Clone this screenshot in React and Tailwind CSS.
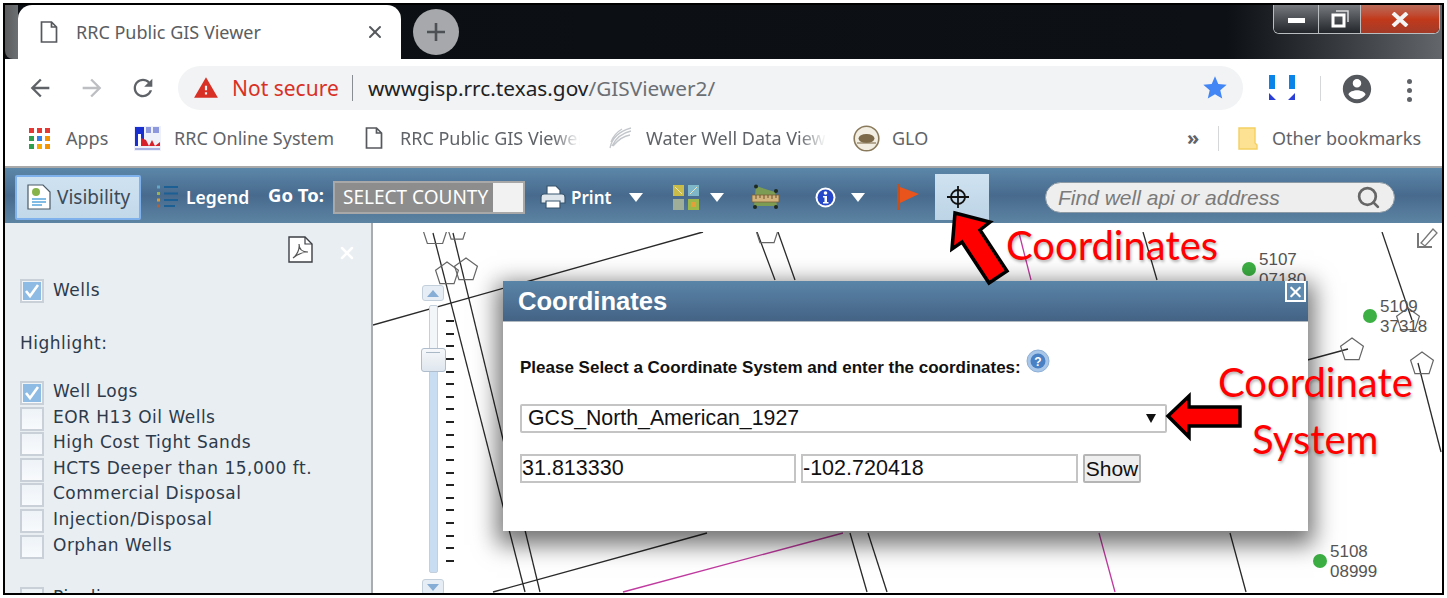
import React from "react";
import { Search, X } from "lucide-react";

const CHROME_FONT = "font-['Noto_Sans',sans-serif]";
const PANEL_FONT = "font-['DejaVu_Sans',sans-serif]";
const ARIAL = "font-['Liberation_Sans',Arial,sans-serif]";

const HIGHLIGHTS = [
  { label: "Well Logs", checked: true },
  { label: "EOR H13 Oil Wells" },
  { label: "High Cost Tight Sands" },
  { label: "HCTS Deeper than 15,000 ft." },
  { label: "Commercial Disposal" },
  { label: "Injection/Disposal" },
  { label: "Orphan Wells" },
];

const TICKS = Array.from({ length: 20 }, (_, i) => i);

const BLACK_LINES = [
  [373, 325, 703, 232],
  [433, 233, 525, 592],
  [453, 233, 540, 592],
  [493, 592, 707, 533],
  [757, 232, 775, 280],
  [778, 232, 795, 280],
  [850, 533, 867, 592],
  [868, 533, 887, 592],
  [1143, 232, 1157, 280],
  [1230, 533, 1246, 592],
  [1382, 232, 1412, 320],
  [1418, 363, 1441, 452],
  [1300, 362, 1348, 349],
];

const MAGENTA_LINES = [
  [623, 592, 843, 533],
  [1019, 233, 1031, 280],
  [1099, 533, 1115, 592],
];

const pentagon = (cx, cy, r) =>
  [0, 1, 2, 3, 4]
    .map((i) => {
      const a = -Math.PI / 2 + (i * 2 * Math.PI) / 5;
      return `${cx + r * Math.cos(a)},${cy + r * Math.sin(a)}`;
    })
    .join(" ");

const PENTAGONS = [
  [447, 274, 12],
  [466, 270, 12],
  [1352, 350, 12],
  [1422, 364, 12],
  [1408, 320, 12],
  [435, 233, 13],
  [457, 231, 10],
  [767, 233, 12],
];

const Caret = ({ className = "" }) => (
  <svg width="14" height="9" viewBox="0 0 14 9" className={`shrink-0 ${className}`}>
    <path d="M0 0h14L7 9z" fill="#fff" />
  </svg>
);

const Material = ({ d, size = 24, fill = "#5f6368", className = "" }) => (
  <svg width={size} height={size} viewBox="0 0 24 24" className={`shrink-0 ${className}`}>
    <path d={d} fill={fill} />
  </svg>
);

const DocIcon = ({ className = "" }) => (
  <svg width="18" height="22" viewBox="0 0 18 22" className={`shrink-0 ${className}`}>
    <path d="M1.5 1h10l5 5v15h-15zM11.5 1v5h5" fill="#fff" stroke="#55585c" strokeWidth="1.7" />
  </svg>
);

const Checkbox = ({ checked }) => (
  <span className="flex h-[24px] w-[24px] shrink-0 items-center justify-center border-2 border-[#c9d0d8] bg-gradient-to-b from-[#eef3f8] to-[#f8fafc]">
    {checked && (
      <svg width="18" height="18" viewBox="0 0 18 18">
        <rect width="18" height="18" fill="#8dbbe3" />
        <path d="M3 9l4 5 8-11" fill="none" stroke="#fff" strokeWidth="2.6" />
      </svg>
    )}
  </span>
);

const TabStrip = () => (
  <div className="relative flex h-[54px] shrink-0 bg-gradient-to-r from-[#0b0e12] via-[#0d1116] via-[85%] to-[#63666a]">
    <div className="h-[54px] w-[13px] rounded-bl-[8px] bg-gradient-to-r from-[#5a5c5e] to-[#6d7072]" />
    <div className="flex h-[54px] w-[383px] items-center rounded-t-[14px] bg-white pl-[22px]">
      <DocIcon />
      <span className={`ml-[18px] w-[289px] text-[18px] text-[#5a5d61] ${CHROME_FONT}`}>RRC Public GIS Viewer</span>
      <X size={20} strokeWidth={2.4} className="text-[#55585c]" />
    </div>
    <div className="ml-[12px] mt-[4px] flex h-[46px] w-[46px] items-center justify-center rounded-full bg-[#a6a8ab]">
      <svg width="20" height="20" viewBox="0 0 20 20">
        <path d="M10 1v18M1 10h18" stroke="#4d5054" strokeWidth="2.6" />
      </svg>
    </div>
    <div className="ml-auto mr-[2px] flex h-[29px] w-[167px] overflow-hidden rounded-b-[6px] border border-t-0 border-[#b9bdc0] bg-black">
      <div className="flex w-[45px] items-center justify-center border-r border-[#b9bdc0] bg-gradient-to-b from-[#777b7f] to-[#23272b]">
        <div className="mt-[2px] h-[5px] w-[17px] bg-white" />
      </div>
      <div className="flex w-[42px] items-center justify-center border-r border-[#b9bdc0] bg-gradient-to-b from-[#777b7f] to-[#23272b]">
        <svg width="18" height="18" viewBox="0 0 18 18">
          <path d="M5 1h12v11" fill="none" stroke="#ddd" strokeWidth="1.5" />
          <rect x="2" y="5" width="11" height="11" fill="none" stroke="#fff" strokeWidth="3" />
        </svg>
      </div>
      <div className="flex flex-1 items-center justify-center bg-gradient-to-b from-[#b86a58] via-[#c2391a] to-[#a23b28]">
        <svg width="18" height="15" viewBox="0 0 18 15">
          <path d="M2 1l14 13M16 1L2 14" stroke="#f4f4f4" strokeWidth="4" />
        </svg>
      </div>
    </div>
  </div>
);

const AddressBar = () => (
  <div className="flex h-[51px] shrink-0 items-start bg-white">
    <Material className="ml-[21px] mt-[15px]" size={28} d="M20 11H7.83l5.59-5.59L12 4l-8 8 8 8 1.41-1.41L7.83 13H20v-2z" />
    <Material className="ml-[24px] mt-[15px] rotate-180" size={28} fill="#bcbec1" d="M20 11H7.83l5.59-5.59L12 4l-8 8 8 8 1.41-1.41L7.83 13H20v-2z" />
    <Material className="ml-[23px] mt-[15px]" size={28} d="M17.65 6.35C16.2 4.9 14.21 4 12 4c-4.42 0-7.99 3.58-7.99 8s3.57 8 7.99 8c3.73 0 6.84-2.55 7.73-6h-2.08c-.82 2.33-3.04 4-5.65 4-3.31 0-6-2.69-6-6s2.69-6 6-6c1.66 0 3.14.69 4.22 1.78L13 11h7V4l-2.35 2.35z" />
    <div className={`ml-[21px] mt-[7px] flex h-[44px] w-[1065px] shrink-0 items-center rounded-full bg-[#f1f3f4] pl-[15px] ${CHROME_FONT}`}>
      <Material size={26} fill="#d93025" d="M1 21h22L12 2 1 21zm12-3h-2v-2h2v2zm0-4h-2v-4h2v4z" />
      <span className="ml-[13px] mt-[2px] w-[107px] whitespace-nowrap text-[21px] text-[#d93025]">Not secure</span>
      <span className="ml-[13px] h-[26px] w-px bg-[#8a8d91]" />
      <span className="ml-[15px] mt-[2px] w-[750px] whitespace-nowrap text-[20.800px] text-[#202124]">
        wwwgisp.rrc.texas.gov<span className="text-[#6b6f74]">/GISViewer2/</span>
      </span>
      <Material className="ml-[83px]" size={28} fill="#4285f4" d="M12 17.27L18.18 21l-1.64-7.03L22 9.24l-7.19-.61L12 2 9.19 8.63 2 9.24l5.46 4.73L5.82 21z" />
    </div>
    <svg width="28" height="28" viewBox="0 0 28 28" className="ml-[25px] mt-[15px] shrink-0">
      <path d="M1 1h6v14H1zM21 1h6v14h-6z" fill="#0a84e8" />
      <path d="M1 19l7 7H1zM27 19l-7 7h7z" fill="#2a3fd8" />
    </svg>
    <span className="ml-[24px] mt-[17px] h-[25px] w-px bg-[#d5d7d9]" />
    <Material className="ml-[19px] mt-[13px]" size={34} fill="#55585c" d="M12 2C6.48 2 2 6.48 2 12s4.48 10 10 10 10-4.48 10-10S17.52 2 12 2zm0 3c1.66 0 3 1.34 3 3s-1.34 3-3 3-3-1.34-3-3 1.34-3 3-3zm0 14.2c-2.5 0-4.71-1.28-6-3.22.03-1.99 4-3.08 6-3.08 1.99 0 5.97 1.09 6 3.08-1.29 1.94-3.5 3.22-6 3.22z" />
    <div className="ml-[33px] mt-[20px] flex flex-col gap-[4px]">
      <span className="h-[5px] w-[5px] rounded-full bg-[#5f6368]" />
      <span className="h-[5px] w-[5px] rounded-full bg-[#5f6368]" />
      <span className="h-[5px] w-[5px] rounded-full bg-[#5f6368]" />
    </div>
  </div>
);

const APPS_COLORS = ["#e53935", "#e53935", "#e53935", "#2e9e4f", "#2f80ed", "#f59300", "#2e9e4f", "#f9ab00", "#f59300"];

const BookmarkText = ({ children, className = "" }) => (
  <span className={`whitespace-nowrap text-[18px] text-[#5f6368] ${className}`}>{children}</span>
);

const Bookmarks = () => (
  <div className={`flex h-[56px] shrink-0 items-center bg-white ${CHROME_FONT}`}>
    <div className="ml-[24px] grid w-[21px] shrink-0 grid-cols-3 gap-[3px]">
      {APPS_COLORS.map((c, i) => (
        <svg key={i} width="5" height="5" viewBox="0 0 5 5">
          <rect width="5" height="5" fill={c} />
        </svg>
      ))}
    </div>
    <BookmarkText className="ml-[16px] w-[42px]">Apps</BookmarkText>
    <svg width="27" height="25" viewBox="0 0 27 25" className="ml-[26px] shrink-0">
      <rect width="27" height="25" fill="#eef0fa" />
      <path d="M1 1h9v19H1z" fill="#1a2fd0" />
      <path d="M12 1h5v6h-5zM19 1h6v6h-6z" fill="#8d99dc" />
      <path d="M4 8h3v12H4z" fill="#fff" />
      <path d="M7 12l5 2 3 6 3-6 3 6 5-4v4H7z" fill="#d8202a" />
      <path d="M1 22h25v2H1z" fill="#aab2e4" />
    </svg>
    <BookmarkText className="ml-[13px] w-[161px]">RRC Online System</BookmarkText>
    <DocIcon className="ml-[30px]" />
    <BookmarkText className="ml-[17px] w-[180px] overflow-hidden [mask-image:linear-gradient(to_right,black_85%,transparent)]">RRC Public GIS Viewer</BookmarkText>
    <svg width="24" height="24" viewBox="0 0 24 24" className="ml-[28px] shrink-0">
      <path d="M2 22C4 12 12 5 23 2M4 20C8 12 14 7 23 5M5 20C10 14 15 10 22 9M3 16C5 10 9 6 14 3" fill="none" stroke="#c3c7cb" strokeWidth="1.3" />
    </svg>
    <BookmarkText className="ml-[14px] w-[180px] overflow-hidden [mask-image:linear-gradient(to_right,black_85%,transparent)]">Water Well Data Viewer</BookmarkText>
    <svg width="27" height="27" viewBox="0 0 27 27" className="ml-[27px] shrink-0">
      <circle cx="13.5" cy="13.5" r="12.3" fill="#f3eee2" stroke="#8a7a5c" strokeWidth="1.6" />
      <ellipse cx="13.5" cy="13.5" rx="8" ry="4.5" fill="#7c6a48" />
      <path d="M4 18h19" stroke="#8a7a5c" strokeWidth="1.2" />
    </svg>
    <BookmarkText className="ml-[12px] w-[38px]">GLO</BookmarkText>
    <span className="ml-[257px] w-[14px] text-[20px] font-bold leading-none text-[#5f6368]">»</span>
    <span className="ml-[17px] h-[25px] w-px bg-[#d5d7d9]" />
    <svg width="20" height="23" viewBox="0 0 20 23" className="ml-[19px] shrink-0">
      <path d="M1 1h16v15l2 2v4H1z" fill="#fde293" stroke="#f4cf63" strokeWidth="1.4" />
    </svg>
    <BookmarkText className="ml-[14px]">Other bookmarks</BookmarkText>
  </div>
);

const Toolbar = () => (
  <div className="flex h-[57px] shrink-0 items-center border-t-2 border-[#a9a9a9] bg-gradient-to-b from-[#5c87a8] via-[#476a8d] to-[#5d84a3] pt-[3px]">
    <div className="ml-[10px] flex h-[45px] w-[126px] shrink-0 items-center rounded-[2px] border-2 border-[#7fb1ec] bg-gradient-to-b from-[#cfe2f1] to-[#c2d9ea] pl-[10px]">
      <svg width="24" height="26" viewBox="0 0 24 26" className="shrink-0">
        <path d="M1 1h15l7 7v17H1z" fill="#fff" stroke="#4a5a66" strokeWidth="1.2" />
        <circle cx="9" cy="8" r="4" fill="#86b44a" />
        <path d="M5 15h14M5 18h14M5 21h10" stroke="#5aa5dc" strokeWidth="1.3" />
      </svg>
      <span className={`ml-[6px] mt-[1px] text-[19px] text-[#3d4a56] ${CHROME_FONT}`}>Visibility</span>
    </div>
    <svg width="21" height="26" viewBox="0 0 21 26" className="ml-[16px] shrink-0">
      <path d="M7 3h14M7 9.500h14M7 16h14M7 22h11" stroke="#1c5f94" strokeWidth="2.2" />
      <rect x="0" y="1.500" width="3" height="3" fill="#63a6c8" />
      <rect x="0" y="8" width="3" height="3" fill="#9bb34a" />
      <rect x="0" y="14.500" width="3" height="3" fill="#d69a36" />
      <rect x="0" y="20.500" width="3" height="3" fill="#b0603a" />
    </svg>
    <span className={`ml-[8px] mt-[1px] w-[63px] whitespace-nowrap text-[17.500px] font-semibold text-white ${CHROME_FONT}`}>Legend</span>
    <span className={`ml-[19px] mb-[4px] w-[58px] whitespace-nowrap text-[18.500px] font-bold text-white ${CHROME_FONT}`}>Go To:</span>
    <div className="ml-[7px] flex h-[33px] w-[192px] shrink-0 border-2 border-[#a8a8a8] bg-[#8d8d8d]">
      <span className={`flex flex-1 items-center whitespace-nowrap pl-[8px] text-[19px] text-white ${CHROME_FONT}`}>SELECT COUNTY</span>
      <span className="w-[30px] bg-[#f2f2f2]" />
    </div>
    <svg width="26" height="24" viewBox="0 0 26 24" className="ml-[15px] shrink-0">
      <path d="M7 1h9l4 4v6H7z" fill="#fff" stroke="#39566f" strokeWidth="1.2" />
      <path d="M1 12c0-2 1-3 3-3h18c2 0 3 1 3 3v6H1z" fill="#dfe6ec" stroke="#39566f" strokeWidth="1.2" />
      <path d="M6 16h14v7H6z" fill="#fff" stroke="#39566f" strokeWidth="1.2" />
    </svg>
    <span className={`ml-[5px] mt-[1px] w-[41px] text-[17px] font-semibold text-white ${CHROME_FONT}`}>Print</span>
    <Caret className="ml-[17px]" />
    <svg width="26" height="25" viewBox="0 0 26 25" className="ml-[30px] shrink-0">
      <rect width="11" height="11" fill="#c9bc4a" />
      <rect x="15" width="11" height="11" fill="#7fb6c8" />
      <rect y="14" width="11" height="11" fill="#9fae98" />
      <rect x="15" y="14" width="11" height="11" fill="#9cb84a" />
      <path d="M2 2l7 7M24 2l-7 7" stroke="#e8e4c0" strokeWidth="1" />
      <rect x="18" y="17" width="5" height="5" fill="#e3a03a" />
    </svg>
    <Caret className="ml-[11px]" />
    <svg width="27" height="26" viewBox="0 0 27 26" className="ml-[28px] shrink-0">
      <path d="M4 2l19 6 2 14H2z" fill="#7c9c54" />
      <circle cx="4" cy="2.500" r="2" fill="#1d2a20" />
      <circle cx="24" cy="7" r="2" fill="#1d2a20" />
      <circle cx="3" cy="23" r="2" fill="#1d2a20" />
      <circle cx="24" cy="23" r="2" fill="#1d2a20" />
      <rect x="0" y="11" width="27" height="7" fill="#d3b47c" stroke="#7a6038" strokeWidth="0.8" />
      <path d="M4 11v4M8 11v3M12 11v4M16 11v3M20 11v4M24 11v3" stroke="#6b5230" strokeWidth="1" />
    </svg>
    <svg width="21" height="21" viewBox="0 0 21 21" className="ml-[36px] shrink-0">
      <circle cx="10.500" cy="10.500" r="10" fill="#fff" />
      <circle cx="10.500" cy="10.500" r="8" fill="#2648c8" />
      <circle cx="10.500" cy="6" r="1.800" fill="#fff" />
      <path d="M8 9h4v6h1.500v1.500h-5.500V15H9.500v-4.500H8z" fill="#fff" />
    </svg>
    <Caret className="ml-[15px]" />
    <svg width="22" height="26" viewBox="0 0 22 26" className="ml-[32px] shrink-0">
      <path d="M1.500 0v26" stroke="#c4501e" strokeWidth="3" />
      <path d="M3 3l19 7-19 9z" fill="#e8541c" />
    </svg>
    <div className="ml-[16px] flex h-[46px] w-[54px] shrink-0 items-center justify-center bg-gradient-to-b from-[#cfe2f1] to-[#bcd4e6] pr-[8px]">
      <svg width="24" height="24" viewBox="0 0 24 24">
        <circle cx="12" cy="12" r="7" fill="none" stroke="#111" strokeWidth="1.8" />
        <path d="M12 1v22M1 12h22" stroke="#111" strokeWidth="1.8" />
      </svg>
    </div>
    <div className="ml-[56px] mt-[1px] flex h-[31px] w-[350px] shrink-0 items-center rounded-full border border-[#8c9aa6] bg-[#eeeeee] pl-[12px]">
      <span className="w-[302px] whitespace-nowrap font-['Liberation_Sans',Arial,sans-serif] text-[21px] italic text-[#7a7a7a]">Find well api or address</span>
      <Search size={25} strokeWidth={2.6} className="-ml-[4px] text-[#666]" />
    </div>
  </div>
);

const SidePanel = () => (
  <aside className={`flex w-[368px] shrink-0 flex-col overflow-hidden border-r-2 border-[#a9adb1] bg-[#e9eef3] pl-[15px] text-[17px] leading-[24px] tracking-[0.5px] text-[#2d3a4a] ${PANEL_FONT}`}>
    <div className="mt-[13px] flex items-center justify-end pr-[14px]">
      <svg width="25" height="27" viewBox="0 0 25 27" className="shrink-0">
        <path d="M1 1h16l7 7v18H1z" fill="#fff" stroke="#3c3f44" strokeWidth="1.4" />
        <path d="M17 1v7h7" fill="none" stroke="#3c3f44" strokeWidth="1.2" />
        <path d="M5 22c4-3 7-9 6-14 0 5 3 8 9 8-5 0-10 2-15 6z" fill="none" stroke="#555" strokeWidth="1.2" />
      </svg>
      <X size={20} strokeWidth={3} className="ml-[24px] mt-[6px] text-white" />
    </div>
    <label className="mt-[16px] flex items-center gap-[9px]">
      <Checkbox checked />
      <span className="-translate-y-[1px]">Wells</span>
    </label>
    <div className="mt-[28px]">Highlight:</div>
    <ul className="mt-[26px] flex flex-col gap-[1.6px]">
      {HIGHLIGHTS.map((h) => (
        <li key={h.label} className="flex items-center gap-[9px] whitespace-nowrap">
          <Checkbox checked={h.checked} />
          <span className="-translate-y-[2px]">{h.label}</span>
        </li>
      ))}
    </ul>
    <label className="mt-[28px] flex items-center gap-[9px]">
      <Checkbox />
      <span className="-translate-y-[2px]">Pipelines</span>
    </label>
  </aside>
);

const ZoomSlider = () => (
  <div className="absolute left-[43px] top-[62px] flex h-[310px] w-[34px] flex-col items-center">
    <div className="flex h-[16px] w-[22px] items-center justify-center rounded-[3px] border border-[#c3d0dc] bg-[#e6edf4]">
      <svg width="12" height="7" viewBox="0 0 12 7"><path d="M6 0l6 7H0z" fill="#86add6" /></svg>
    </div>
    <div className="relative mt-[4px] h-[268px] w-[9px] rounded-[2px] border border-[#c3cfdb] bg-gradient-to-b from-[#f3f6f9] from-[25%] to-[#c8ddf2] to-[25%]">
      <div className="absolute left-[-9px] top-[42px] flex h-[24px] w-[25px] justify-center rounded-[3px] border border-[#aebccb] bg-gradient-to-b from-[#f6f8fa] to-[#dfe6ee] pt-[3px]">
        <div className="h-px w-[14px] bg-[#aab7c5]" />
      </div>
    </div>
    <div className="mt-[6px] flex h-[16px] w-[22px] items-center justify-center rounded-[3px] border border-[#c3d0dc] bg-[#e6edf4]">
      <svg width="12" height="7" viewBox="0 0 12 7"><path d="M0 0h12L6 7z" fill="#86add6" /></svg>
    </div>
    <div className="absolute left-[30px] top-[35px] flex flex-col gap-[10.630px]">
      {TICKS.map((t) => (
        <div key={t} className="h-[2px] w-[8px] bg-[#222]" />
      ))}
    </div>
  </div>
);

const WellLabel = ({ top, left, a, b }) => (
  <div className={`absolute flex items-center gap-[3px] text-[17px] leading-[20px] text-[#555] ${ARIAL}`} style={{ top, left }}>
    <span className="h-[14px] w-[14px] rounded-full bg-[#3cb043]" />
    <span className="translate-y-[1px]">{a}<br />{b}</span>
  </div>
);

const Dialog = () => (
  <div className={`absolute left-[130px] top-[58px] flex h-[250px] w-[805px] flex-col bg-white shadow-[0_8px_22px_6px_rgba(0,0,0,0.55)] ${ARIAL}`}>
    <div className="flex h-[41px] shrink-0 items-center justify-between border-b border-[#b0b8c0] bg-gradient-to-b from-[#5a85a8] to-[#446385] pl-[15px]">
      <span className="mt-[1px] text-[25.600px] font-bold text-white">Coordinates</span>
      <div className="mr-[2px] flex h-[21px] w-[21px] items-center justify-center self-start border-2 border-white bg-[#5f8bb0]">
        <X size={18} strokeWidth={3} className="text-white" />
      </div>
    </div>
    <div className="flex flex-1 flex-col pl-[17px] pr-[141px]">
      <div className="mt-[31px] flex h-[30px] items-center">
        <span className="whitespace-nowrap text-[17px] font-bold text-[#111]">Please Select a Coordinate System and enter the coordinates:</span>
        <svg width="24" height="24" viewBox="0 0 24 24" className="-mt-[14px] ml-[5px] shrink-0">
          <circle cx="12" cy="12" r="11" fill="#a8c6e8" stroke="#8fb0d8" />
          <circle cx="12" cy="12" r="7.500" fill="#4a80c4" />
          <text x="12" y="16.500" textAnchor="middle" fontSize="12" fontWeight="700" fill="#fff">?</text>
        </svg>
      </div>
      <div className="relative mt-[21px] flex h-[29px] items-center rounded-[2px] border-2 border-[#c4c4c4] pl-[6px] text-[21.300px] text-[#111]">
        GCS_North_American_1927
        <svg width="10" height="10" viewBox="0 0 10 10" className="absolute right-[9px] top-[7px]">
          <path d="M0 1h10L5 10z" fill="#111" />
        </svg>
      </div>
      <div className="mt-[21px] flex h-[29px] gap-[5px] text-[21.500px] text-[#111]">
        <div className="flex w-[276px] items-center border-2 border-[#c4c4c4]">31.813330</div>
        <div className="flex w-[277px] items-center border-2 border-[#c4c4c4]">-102.720418</div>
        <div className="flex w-[58px] items-center justify-center rounded-[2px] border-2 border-[#b5b5b5] bg-[#efefef] text-[21px]">Show</div>
      </div>
    </div>
  </div>
);

const MapArea = () => (
  <main className="relative flex-1 overflow-hidden bg-white">
    <svg className="absolute inset-0 h-full w-full" viewBox="373 223 1069 370" preserveAspectRatio="none">
      {BLACK_LINES.map(([x1, y1, x2, y2], i) => (
        <line key={i} x1={x1} y1={y1} x2={x2} y2={y2} stroke="#2a2a2a" strokeWidth="1.3" />
      ))}
      {MAGENTA_LINES.map(([x1, y1, x2, y2], i) => (
        <line key={i} x1={x1} y1={y1} x2={x2} y2={y2} stroke="#c03aa0" strokeWidth="1.3" />
      ))}
      {PENTAGONS.map(([cx, cy, r], i) => (
        <polygon key={i} points={pentagon(cx, cy, r)} fill="none" stroke="#666" strokeWidth="1.2" />
      ))}
      <rect x="373" y="223" width="1069" height="9" fill="#fff" />
      <path d="M1418 233v14h14" fill="none" stroke="#777" strokeWidth="2" />
      <path d="M1421 243l12-14 4 4-12 13z" fill="#fff" stroke="#777" strokeWidth="1.300" />
    </svg>
    <ZoomSlider />
    <WellLabel top={26} left={869} a="5107" b="07180" />
    <WellLabel top={73} left={990} a="5109" b="37318" />
    <WellLabel top={318} left={940} a="5108" b="08999" />
    <Dialog />
  </main>
);

const Annotations = () => (
  <>
    <svg className="absolute left-0 top-0 h-[598px] w-[1447px]" viewBox="0 0 1447 598">
      <polygon points="955,213 990,222 980,230 1007,271 989,283 962,242 952,249" fill="#ff0000" stroke="#000" strokeWidth="3.500" strokeLinejoin="miter" />
      <polygon points="1168,416 1189,396 1189,407 1240,407 1240,426 1189,426 1189,437" fill="#ff0000" stroke="#000" strokeWidth="3.500" strokeLinejoin="miter" />
    </svg>
    <span className="absolute left-[1006px] top-[222px] whitespace-nowrap font-['Lato',sans-serif] text-[40px] leading-[46px] text-[#ff0000] [text-shadow:1px_2px_3px_rgba(0,0,0,0.3)]">Coordinates</span>
    <span className="absolute left-[1218px] top-[359px] whitespace-nowrap font-['Lato',sans-serif] text-[40px] leading-[46px] text-[#ff0000] [text-shadow:1px_2px_3px_rgba(0,0,0,0.3)]">Coordinate</span>
    <span className="absolute left-[1252px] top-[416px] whitespace-nowrap font-['Lato',sans-serif] text-[40px] leading-[46px] text-[#ff0000] [text-shadow:1px_2px_3px_rgba(0,0,0,0.3)]">System</span>
  </>
);

export default function App() {
  return (
    <div className="relative h-[598px] w-[1447px] overflow-hidden bg-white p-[3px]">
      <div className="flex h-[592px] w-[1441px] flex-col overflow-hidden border-2 border-black">
        <TabStrip />
        <AddressBar />
        <Bookmarks />
        <Toolbar />
        <div className="flex min-h-0 flex-1">
          <SidePanel />
          <MapArea />
        </div>
      </div>
      <Annotations />
    </div>
  );
}
